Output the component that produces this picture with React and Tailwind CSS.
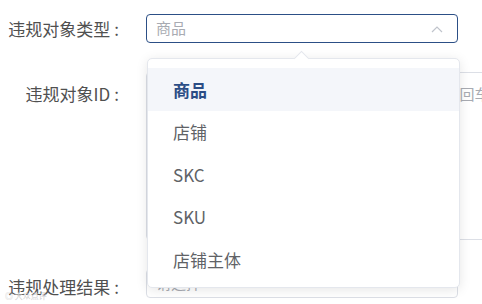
import React from 'react';

const options = ['商品', '店铺', 'SKC', 'SKU', '店铺主体'];

function Label({ children, className = '' }) {
  return (
    <div className={`w-[146px] shrink-0 pr-[27px] text-right text-[17px] leading-[29px] text-[#505050] ${className}`}>
      {children}
      <span className="ml-[4px]">:</span>
    </div>
  );
}

function Chevron() {
  return (
    <svg width="12" height="8" viewBox="0 0 12 8" fill="none">
      <path d="M1 7 L6 2 L11 7" stroke="#c0c4cc" strokeWidth="1.2" />
    </svg>
  );
}

export default function App() {
  return (
    <div
      className="relative h-[304px] w-[482px] overflow-hidden bg-white pt-[14px]"
      style={{ fontFamily: '"Noto Sans CJK SC", "Noto Sans", sans-serif' }}
    >
      {/* 违规对象类型 */}
      <div className="flex items-start">
        <Label>违规对象类型</Label>
        <div className="relative">
          <div className="flex h-[29px] w-[312px] items-center justify-between rounded-[4px] border border-[#2c4f86] pl-[9px] pr-[14px]">
            <span className="text-[15px] text-[#a8abb2]">商品</span>
            <Chevron />
          </div>

          {/* dropdown */}
          <div className="absolute left-[1px] top-[44px] z-10 w-[313px] rounded-[5px] border border-[#e4e7ed] bg-white pb-[6px] pt-[9px] shadow-[0_2px_12px_rgba(0,0,0,0.1)]">
            <div className="absolute left-[148px] top-[-6px] h-[11px] w-[11px] rotate-45 border-l border-t border-[#e4e7ed] bg-white" />
            {options.map((opt, i) => (
              <div
                key={opt}
                className={`flex h-[42.5px] items-center pl-[25px] text-[17px] ${
                  i === 0 ? 'bg-[#f4f6fa] font-bold text-[#2b4d85]' : 'text-[#606266]'
                }`}
              >
                {opt}
              </div>
            ))}
          </div>
        </div>
      </div>

      {/* 违规对象ID */}
      <div className="mt-[29px] flex items-start">
        <Label className="mt-[7px]">违规对象ID</Label>
        <div className="h-[168px] w-[420px] shrink-0 rounded-[4px] border border-[#dcdfe6] pl-[13px] pr-[10px] pt-[8px] text-[15px] leading-[26px] text-[#a8abb2] whitespace-nowrap">
          请输入违规对象ID，多个违规对象ID之间请用回车换行
        </div>
      </div>

      {/* 违规处理结果 */}
      <div className="mt-[29px] flex items-start">
        <Label className="mt-[3px]">违规处理结果</Label>
        <div className="flex h-[29px] w-[312px] items-center justify-between rounded-[4px] border border-[#dcdfe6] pl-[9px] pr-[14px]">
          <span className="text-[15px] text-[#a8abb2]">请选择</span>
        </div>
      </div>

      <div className="absolute bottom-[3px] left-[5px] text-[8px] leading-[10px] text-[#d0d0d0]">◎ 大众点评</div>
    </div>
  );
}
